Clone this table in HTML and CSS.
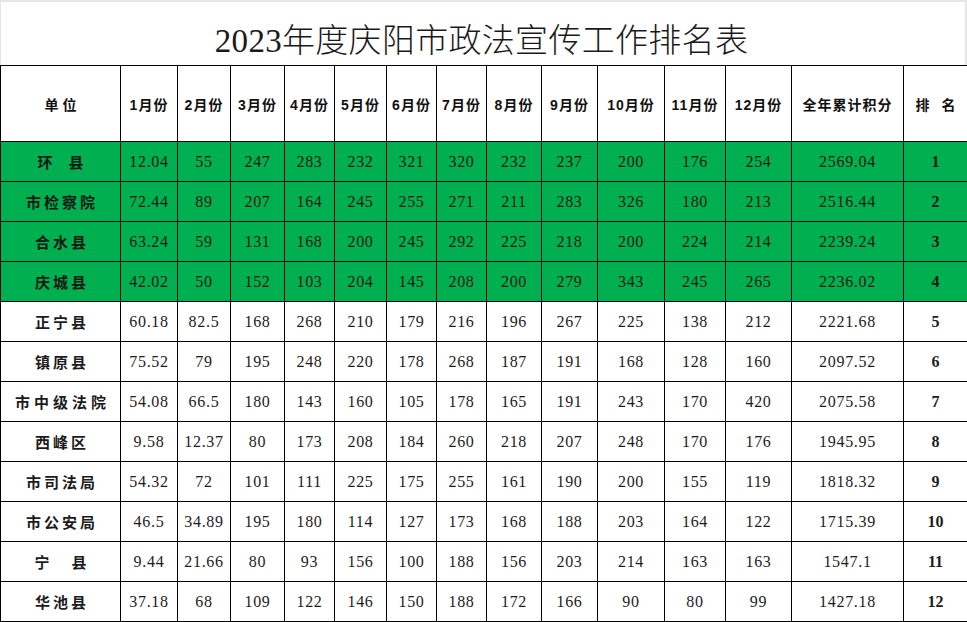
FILE: index.html
```html
<!DOCTYPE html>
<html lang="zh">
<head>
<meta charset="utf-8">
<title>2023年度庆阳市政法宣传工作排名表</title>
<link rel="stylesheet" href="styles.css">
</head>
<body>
<div class="sheet">
  <div class="title">2023年度庆阳市政法宣传工作排名表</div>
  <table class="rank">
    <colgroup>
      <col class="c-unit"><col class="c1"><col class="c2"><col class="c3"><col class="c4"><col class="c5"><col class="c6"><col class="c7"><col class="c8"><col class="c9"><col class="c10"><col class="c11"><col class="c12"><col class="c-total"><col class="c-rank">
    </colgroup>
    <thead>
      <tr>
        <th class="h-unit">单位</th><th>1月份</th><th>2月份</th><th>3月份</th><th>4月份</th><th>5月份</th><th>6月份</th><th>7月份</th><th>8月份</th><th>9月份</th><th>10月份</th><th>11月份</th><th>12月份</th><th>全年累计积分</th><th class="h-rank">排 名</th>
      </tr>
    </thead>
    <tbody>
      <tr class="top"><td class="unit">环&nbsp;&nbsp;县</td><td>12.04</td><td>55</td><td>247</td><td>283</td><td>232</td><td>321</td><td>320</td><td>232</td><td>237</td><td>200</td><td>176</td><td>254</td><td>2569.04</td><td class="rk">1</td></tr>
      <tr class="top"><td class="unit">市检察院</td><td>72.44</td><td>89</td><td>207</td><td>164</td><td>245</td><td>255</td><td>271</td><td>211</td><td>283</td><td>326</td><td>180</td><td>213</td><td>2516.44</td><td class="rk">2</td></tr>
      <tr class="top"><td class="unit">合水县</td><td>63.24</td><td>59</td><td>131</td><td>168</td><td>200</td><td>245</td><td>292</td><td>225</td><td>218</td><td>200</td><td>224</td><td>214</td><td>2239.24</td><td class="rk">3</td></tr>
      <tr class="top"><td class="unit">庆城县</td><td>42.02</td><td>50</td><td>152</td><td>103</td><td>204</td><td>145</td><td>208</td><td>200</td><td>279</td><td>343</td><td>245</td><td>265</td><td>2236.02</td><td class="rk">4</td></tr>
      <tr><td class="unit">正宁县</td><td>60.18</td><td>82.5</td><td>168</td><td>268</td><td>210</td><td>179</td><td>216</td><td>196</td><td>267</td><td>225</td><td>138</td><td>212</td><td>2221.68</td><td class="rk">5</td></tr>
      <tr><td class="unit">镇原县</td><td>75.52</td><td>79</td><td>195</td><td>248</td><td>220</td><td>178</td><td>268</td><td>187</td><td>191</td><td>168</td><td>128</td><td>160</td><td>2097.52</td><td class="rk">6</td></tr>
      <tr><td class="unit wide">市中级法院</td><td>54.08</td><td>66.5</td><td>180</td><td>143</td><td>160</td><td>105</td><td>178</td><td>165</td><td>191</td><td>243</td><td>170</td><td>420</td><td>2075.58</td><td class="rk">7</td></tr>
      <tr><td class="unit">西峰区</td><td>9.58</td><td>12.37</td><td>80</td><td>173</td><td>208</td><td>184</td><td>260</td><td>218</td><td>207</td><td>248</td><td>170</td><td>176</td><td>1945.95</td><td class="rk">8</td></tr>
      <tr><td class="unit">市司法局</td><td>54.32</td><td>72</td><td>101</td><td>111</td><td>225</td><td>175</td><td>255</td><td>161</td><td>190</td><td>200</td><td>155</td><td>119</td><td>1818.32</td><td class="rk">9</td></tr>
      <tr><td class="unit">市公安局</td><td>46.5</td><td>34.89</td><td>195</td><td>180</td><td>114</td><td>127</td><td>173</td><td>168</td><td>188</td><td>203</td><td>164</td><td>122</td><td>1715.39</td><td class="rk">10</td></tr>
      <tr><td class="unit">宁&nbsp;&nbsp;&nbsp;县</td><td>9.44</td><td>21.66</td><td>80</td><td>93</td><td>156</td><td>100</td><td>188</td><td>156</td><td>203</td><td>214</td><td>163</td><td>163</td><td>1547.1</td><td class="rk">11</td></tr>
      <tr><td class="unit">华池县</td><td>37.18</td><td>68</td><td>109</td><td>122</td><td>146</td><td>150</td><td>188</td><td>172</td><td>166</td><td>90</td><td>80</td><td>99</td><td>1427.18</td><td class="rk">12</td></tr>
    </tbody>
  </table>
</div>
</body>
</html>
```

FILE: styles.css
```css
html, body {
  margin: 0;
  padding: 0;
  background: #fff;
}

.sheet {
  width: 967px;
}

.title {
  box-sizing: border-box;
  height: 65px;
  border-top: 2px solid #e6e6e6;
  border-left: 1px solid #e6e6e6;
  border-right: 2px solid #e6e6e6;
  display: flex;
  align-items: center;
  justify-content: center;
  padding-top: 8px;
  padding-right: 3px;
  font-family: "Liberation Serif", "Noto Sans CJK SC", serif;
  font-size: 33px;
  font-weight: 300;
  color: #1a1a1a;
  letter-spacing: 0.3px;
}

.rank {
  width: 967px;
  border-collapse: collapse;
  table-layout: fixed;
}

.rank th,
.rank td {
  border: 1px solid #000;
  padding: 0;
  text-align: center;
  vertical-align: middle;
  white-space: nowrap;
  overflow: hidden;
}

.c-unit { width: 120px; }
.c1 { width: 57px; }
.c2 { width: 53px; }
.c3 { width: 54px; }
.c4 { width: 50px; }
.c5 { width: 52px; }
.c6 { width: 50px; }
.c7 { width: 50px; }
.c8 { width: 55px; }
.c9 { width: 56px; }
.c10 { width: 67px; }
.c11 { width: 61px; }
.c12 { width: 66px; }
.c-total { width: 112px; }
.c-rank { width: 64px; }

.rank thead th {
  height: 75px;
  font-family: "Liberation Sans", "Noto Sans CJK SC", sans-serif;
  font-size: 14px;
  font-weight: 700;
  color: #111;
  letter-spacing: 1px;
}

.rank thead th.h-unit {
  letter-spacing: 4px;
  padding-left: 4px;
}

.rank thead th.h-rank {
  letter-spacing: 4px;
  padding-left: 4px;
}

.rank tbody td {
  height: 39px;
  font-family: "Liberation Serif", "Noto Sans CJK SC", serif;
  font-size: 16px;
  color: #1c1c1c;
  letter-spacing: 0.7px;
}

.rank tbody tr.top td {
  background: #00b050;
  color: #0f1a12;
}

.rank tbody td.unit {
  font-family: "Noto Sans CJK SC", sans-serif;
  font-size: 15px;
  font-weight: 700;
  letter-spacing: 3px;
  padding-left: 3px;
}

.rank tbody td.unit.wide {
  letter-spacing: 4px;
  padding-left: 4px;
}

.rank tbody td.rk {
  font-family: "Liberation Serif", serif;
  font-weight: 700;
  font-size: 16px;
  letter-spacing: 0;
}
```
